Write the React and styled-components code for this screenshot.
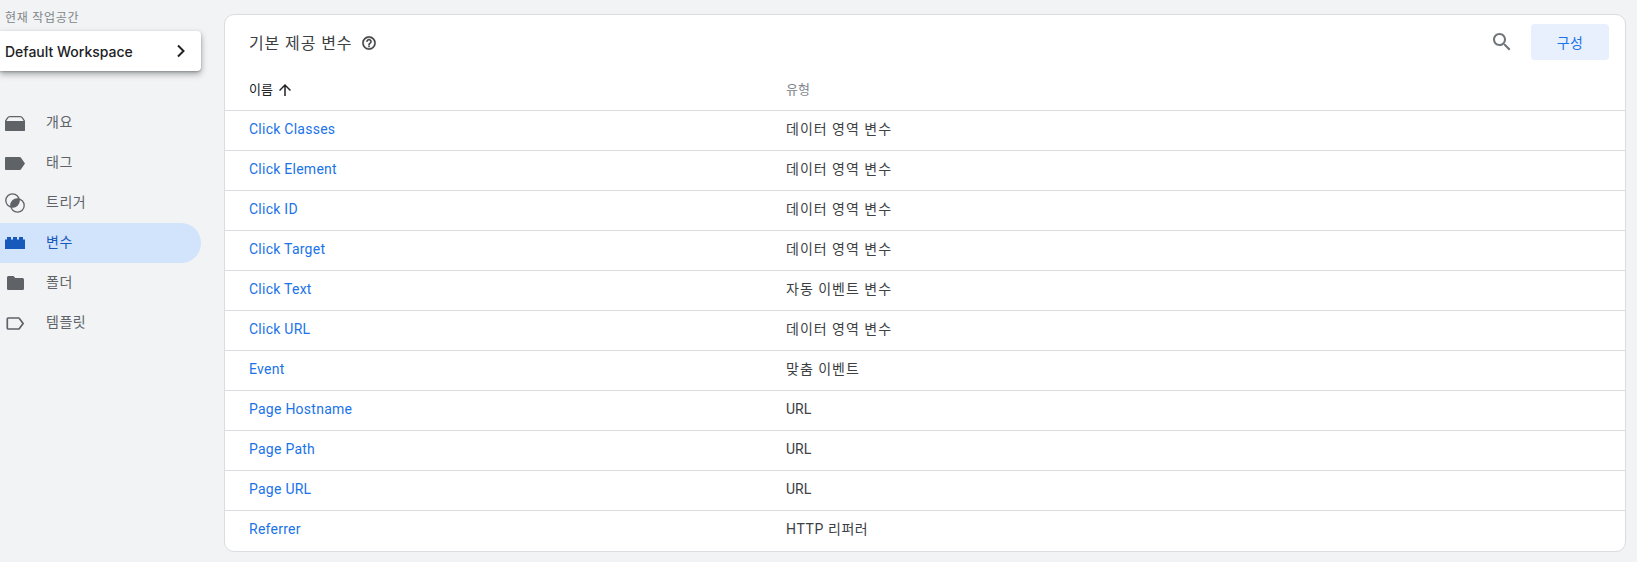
import React from "react";
import styled, { createGlobalStyle } from "styled-components";

const GlobalStyle = createGlobalStyle`
    html, body {
        margin: 0;
        padding: 0;
        height: 100%;
        overflow: hidden;
        background: #f1f3f4;
        font-family: Roboto, "Noto Sans CJK KR", sans-serif;
    }
`;

const Page = styled.div`
    display: flex;
    width: 1637px;
    height: 562px;
    background: #f1f3f4;
`;

const Sidebar = styled.aside`
    width: 224px;
    flex: none;
    padding-top: 12px;
    box-sizing: border-box;
`;

const WorkspaceLabel = styled.div`
    height: 19px;
    padding-left: 5px;
    font-size: 12px;
    line-height: 13px;
    letter-spacing: 0.7px;
    color: #80868b;
`;

const WorkspaceCard = styled.div`
    display: flex;
    align-items: center;
    justify-content: space-between;
    width: 201px;
    height: 40px;
    padding: 0 15px 0 5px;
    box-sizing: border-box;
    background: #fff;
    border-radius: 0 4px 4px 0;
    box-shadow: 0 3px 6px rgba(60, 64, 67, 0.45), 0 1px 2px rgba(60, 64, 67, 0.3);
    font-family: Inter, sans-serif;
    font-size: 14px;
    font-weight: 500;
    color: #202124;
`;

const Nav = styled.nav`
    display: flex;
    flex-direction: column;
    margin-top: 32px;
`;

const NavItem = styled.div`
    display: flex;
    align-items: center;
    width: 201px;
    height: 40px;
    padding-left: 5px;
    box-sizing: border-box;
    border-radius: 0 20px 20px 0;
    font-size: 14px;
    line-height: 18px;
    letter-spacing: 0.5px;
    color: ${(p) => (p.$active ? "#185abc" : "#5f6368")};
    background: ${(p) => (p.$active ? "#d2e3fc" : "transparent")};
`;

const NavIcon = styled.span`
    display: flex;
    align-items: center;
    justify-content: center;
    flex: none;
    width: 20px;
    margin-right: 21px;
`;

const NavText = styled.span`
    margin-top: -2px;
`;

const Card = styled.main`
    flex: none;
    width: 1402px;
    height: 538px;
    margin-top: 14px;
    box-sizing: border-box;
    background: #fff;
    border: 1px solid #dadce0;
    border-radius: 10px;
    overflow: hidden;
`;

const CardHeader = styled.header`
    display: flex;
    align-items: center;
    height: 54px;
    padding: 0 16px 0 24px;
`;

const Title = styled.h1`
    margin: 0;
    font-size: 16px;
    font-weight: 400;
    letter-spacing: 0.9px;
    color: #3c4043;
`;

const HelpButton = styled.span`
    display: flex;
    margin: 2px 0 0 9px;
`;

const SearchButton = styled.span`
    display: flex;
    margin-left: auto;
    margin-right: 17px;
`;

const ConfigButton = styled.button`
    width: 78px;
    height: 36px;
    border: 0;
    border-radius: 4px;
    background: #e8f0fe;
    color: #1a73e8;
    font-family: inherit;
    font-size: 14px;
    font-weight: 400;
    letter-spacing: 0.4px;
`;

const Row = styled.div`
    display: grid;
    grid-template-columns: 537px 1fr;
    align-items: center;
    height: 40px;
    box-sizing: border-box;
    padding: 0 0 ${(p) => (p.$last ? "4px" : "3px")} 24px;
    line-height: 20px;
    border-bottom: ${(p) => (p.$last ? "0" : "1px solid #dadce0")};
`;

const HeaderRow = styled(Row)`
    height: 42px;
    padding-bottom: 0;
`;

const SortLabel = styled.span`
    display: flex;
    align-items: center;
    gap: 3px;
    font-size: 13px;
    color: #202124;
`;

const TypeLabel = styled.span`
    font-size: 13px;
    color: #80868b;
`;

const NameLink = styled.a`
    font-size: 14px;
    letter-spacing: 0.25px;
    color: #1a73e8;
    text-decoration: none;
`;

const TypeText = styled.span`
    font-size: 14px;
    letter-spacing: ${(p) => p.$spacing}px;
    color: #3c4043;
`;

const OverviewIcon = () => (
    <svg width="20" height="15" viewBox="0 0 20 15">
        <path d="M5 .7h10c1.200 0 2 .5 2.600 1.500L20 6v7c0 1-.8 1.300-1.600 1.300H1.600C.8 14.300 0 14 0 13V6l2.400-3.800C3 1.200 3.800.7 5 .7z" fill="none" stroke="#5f6368" strokeWidth="1.300" />
        <path d="M0 5h20v8.400c0 .9-.7 1.600-1.600 1.600H1.600C.7 15 0 14.300 0 13.400z" fill="#5f6368" />
    </svg>
);

const TagIcon = () => (
    <svg width="20" height="13" viewBox="0 0 20 13">
        <path d="M1 0h13.500c.5 0 1 .2 1.300.6L20 6.500l-4.200 5.900c-.3.400-.8.600-1.300.6H1c-.6 0-1-.5-1-1V1c0-.5.400-1 1-1z" fill="#5f6368" />
    </svg>
);

const TriggerIcon = () => (
    <svg width="20" height="20" viewBox="0 0 20 20">
        <circle cx="7.500" cy="7.500" r="6.700" fill="none" stroke="#5f6368" strokeWidth="1.300" />
        <circle cx="12.500" cy="12.500" r="6.700" fill="none" stroke="#5f6368" strokeWidth="1.300" />
        <path d="M14.020 5.980A6.700 6.700 0 0 1 5.980 14.020 6.700 6.700 0 0 1 14.020 5.980z" fill="#5f6368" />
    </svg>
);

const BrickIcon = () => (
    <svg width="20" height="12" viewBox="0 0 20 12">
        <path d="M0 2.500h2V0h4v2.500h2V0h4v2.500h2V0h4v2.500h2V12H0z" fill="#185abc" />
    </svg>
);

const FolderIcon = () => (
    <svg width="17" height="14" viewBox="0 0 17 14">
        <path d="M1.500 0h5l1.800 2h7c.9 0 1.700.7 1.700 1.600v8.800c0 .9-.8 1.600-1.700 1.600H1.500C.7 14 0 13.300 0 12.400V1.600C0 .7.700 0 1.500 0z" fill="#5f6368" />
    </svg>
);

const TemplateIcon = () => (
    <svg width="18" height="13" viewBox="0 0 18 13">
        <path d="M2.200 1h10.300c.4 0 .7.200.9.500l3.700 5-3.700 5c-.2.300-.5.500-.9.500H2.200c-.5 0-.9-.4-.9-.9V1.900c0-.5.400-.9.900-.9z" fill="none" stroke="#5f6368" strokeWidth="1.700" />
    </svg>
);

const navItems = [
    { label: "개요", icon: <OverviewIcon /> },
    { label: "태그", icon: <TagIcon /> },
    { label: "트리거", icon: <TriggerIcon /> },
    { label: "변수", icon: <BrickIcon />, active: true },
    { label: "폴더", icon: <FolderIcon /> },
    { label: "템플릿", icon: <TemplateIcon /> },
];

const rows = [
    ["Click Classes", "데이터 영역 변수", 1],
    ["Click Element", "데이터 영역 변수", 1],
    ["Click ID", "데이터 영역 변수", 1],
    ["Click Target", "데이터 영역 변수", 1],
    ["Click Text", "자동 이벤트 변수", 1],
    ["Click URL", "데이터 영역 변수", 1],
    ["Event", "맞춤 이벤트", 1],
    ["Page Hostname", "URL", 0],
    ["Page Path", "URL", 0],
    ["Page URL", "URL", 0],
    ["Referrer", "HTTP 리퍼러", 0.6],
];

export default function App() {
    return (
        <Page>
            <GlobalStyle />
            <Sidebar>
                <WorkspaceLabel>현재 작업공간</WorkspaceLabel>
                <WorkspaceCard>
                    Default Workspace
                    <svg width="10" height="14" viewBox="0 0 10 14">
                        <path d="M2 1.500 7.500 7 2 12.500" fill="none" stroke="#202124" strokeWidth="2" />
                    </svg>
                </WorkspaceCard>
                <Nav>
                    {navItems.map((item) => (
                        <NavItem key={item.label} $active={item.active}>
                            <NavIcon>{item.icon}</NavIcon>
                            <NavText>{item.label}</NavText>
                        </NavItem>
                    ))}
                </Nav>
            </Sidebar>
            <Card>
                <CardHeader>
                    <Title>기본 제공 변수</Title>
                    <HelpButton>
                        <svg width="16" height="16" viewBox="0 0 24 24" fill="#3c4043" stroke="#3c4043" strokeWidth="0.5">
                            <path d="M11 18h2v-2h-2v2zm1-16C6.480 2 2 6.480 2 12s4.480 10 10 10 10-4.480 10-10S17.520 2 12 2zm0 18c-4.410 0-8-3.590-8-8s3.590-8 8-8 8 3.590 8 8-3.590 8-8 8zm0-14c-2.210 0-4 1.790-4 4h2c0-1.100.9-2 2-2s2 .9 2 2c0 2-3 1.750-3 5h2c0-2.250 3-2.500 3-5 0-2.210-1.790-4-4-4z" />
                        </svg>
                    </HelpButton>
                    <SearchButton>
                        <svg width="24" height="24" viewBox="0 0 24 24" fill="#70757a">
                            <path d="M15.500 14h-.79l-.28-.27C15.410 12.590 16 11.110 16 9.500 16 5.910 13.090 3 9.500 3S3 5.910 3 9.500 5.910 16 9.500 16c1.610 0 3.090-.59 4.230-1.570l.27.28v.79l5 4.990L20.490 19l-4.990-5zm-6 0C7.010 14 5 11.990 5 9.500S7.010 5 9.500 5 14 7.010 14 9.500 11.990 14 9.500 14z" />
                        </svg>
                    </SearchButton>
                    <ConfigButton>구성</ConfigButton>
                </CardHeader>
                <HeaderRow>
                    <SortLabel>
                        이름
                        <svg width="18" height="18" viewBox="0 0 24 24" fill="#202124">
                            <path d="M4 12l1.410 1.410L11 7.830V20h2V7.830l5.580 5.590L20 12l-8-8-8 8z" />
                        </svg>
                    </SortLabel>
                    <TypeLabel>유형</TypeLabel>
                </HeaderRow>
                {rows.map(([name, type, spacing], i) => (
                    <Row key={name} $last={i === rows.length - 1}>
                        <NameLink>{name}</NameLink>
                        <TypeText $spacing={spacing}>{type}</TypeText>
                    </Row>
                ))}
            </Card>
        </Page>
    );
}
